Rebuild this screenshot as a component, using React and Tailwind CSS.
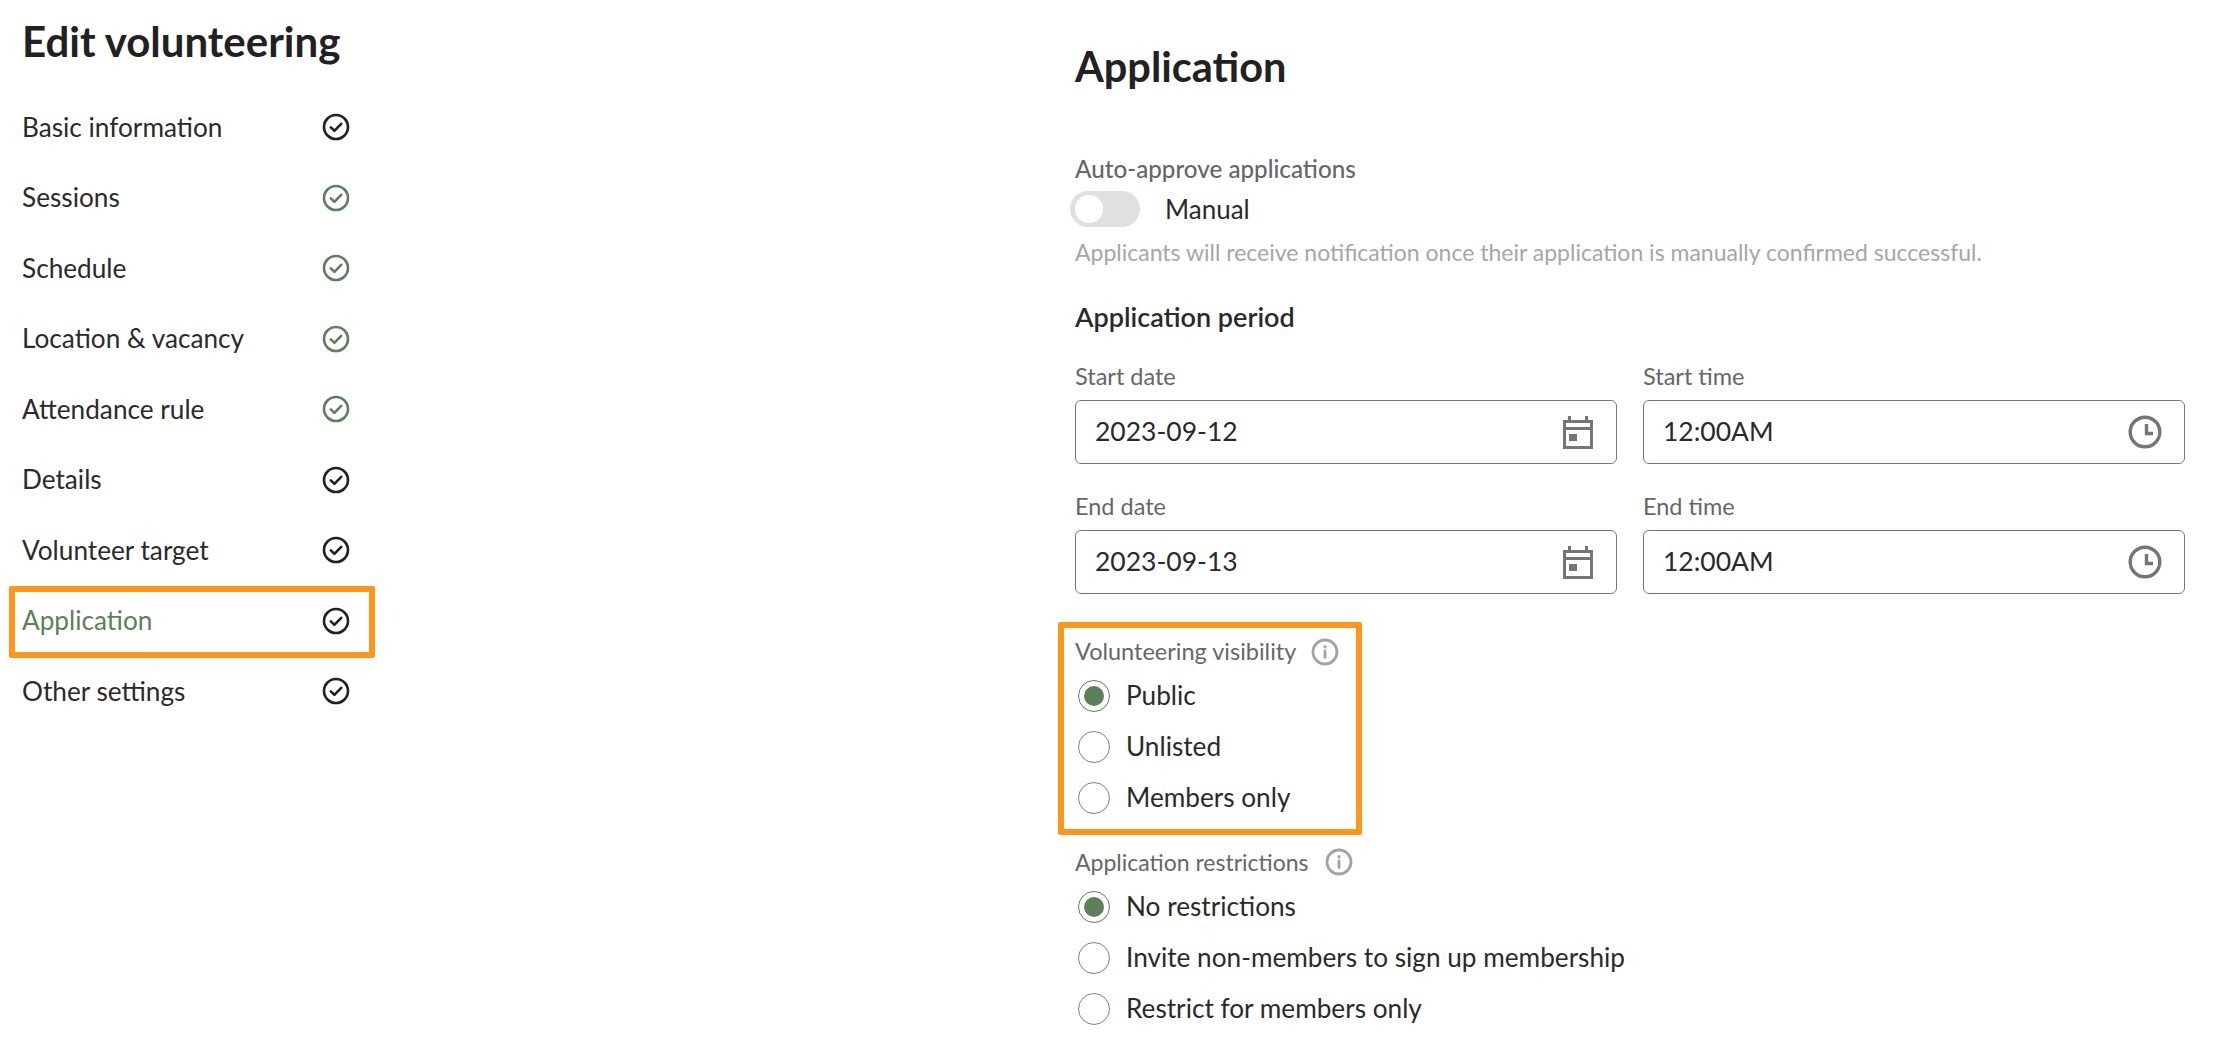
import React from 'react'

const navItems = [
  { label: 'Basic information', done: false },
  { label: 'Sessions', done: true },
  { label: 'Schedule', done: true },
  { label: 'Location & vacancy', done: true },
  { label: 'Attendance rule', done: true },
  { label: 'Details', done: false },
  { label: 'Volunteer target', done: false },
  { label: 'Application', done: false, active: true },
  { label: 'Other settings', done: false },
]

function CheckCircle({ green }) {
  return (
    <svg width="28" height="28" viewBox="0 0 28 28" fill="none" stroke={green ? '#5c8059' : '#212121'} strokeWidth="2.6" strokeLinecap="round" strokeLinejoin="round">
      <circle cx="14" cy="14" r="12" />
      <path d="M8.8 14.4l3.6 3.4 6.8-7" />
    </svg>
  )
}

function InfoIcon() {
  return (
    <svg width="28" height="28" viewBox="0 0 28 28" fill="none" stroke="#a3a3a3" strokeWidth="2.8" strokeLinecap="round">
      <circle cx="14" cy="14" r="12" />
      <path d="M14 13v6.5" />
      <path d="M14 8.6v.4" strokeWidth="3" />
    </svg>
  )
}

function CalendarIcon() {
  return (
    <svg width="32" height="34" viewBox="0 0 32 34" fill="#757575">
      <path fillRule="evenodd" d="M6 1h3v4h14V1h3v4h5v29H1V5h5V1zM4 8v4h24V8H4zm0 7v16h24V15H4z" />
      <rect x="7" y="19" width="8" height="7" />
    </svg>
  )
}

function ClockIcon() {
  return (
    <svg width="34" height="34" viewBox="0 0 34 34" fill="none" stroke="#757575" strokeWidth="3.4">
      <circle cx="17" cy="17" r="14.8" />
      <path d="M18.5 9v9.5h6.5" />
    </svg>
  )
}

function Field({ label, value, icon }) {
  return (
    <div className="flex-1">
      <div className="h-[36px] text-[23.5px] leading-[36px] text-[#666666]">{label}</div>
      <div className="mt-[6px] flex h-[64px] items-center justify-between rounded-[6px] border-[1.5px] border-[#757575] pl-[19px] pr-[22px] text-[26.5px] text-[#2a2a2a]">
        <span>{value}</span>
        {icon}
      </div>
    </div>
  )
}

function Radio({ label, checked }) {
  return (
    <div className="flex h-[51px] items-center pl-[3px]">
      {checked ? (
        <span className="flex h-[32px] w-[32px] items-center justify-center rounded-full border-[1.5px] border-[#5c8059]">
          <span className="h-[20px] w-[20px] rounded-full bg-[#5c8059]"></span>
        </span>
      ) : (
        <span className="h-[32px] w-[32px] rounded-full border-[1.5px] border-[#808080]"></span>
      )}
      <span className="ml-[16px] text-[26.2px] text-[#2a2a2a]">{label}</span>
    </div>
  )
}

export default function App() {
  return (
    <div className="flex min-h-screen bg-white font-['Lato','Noto_Sans',sans-serif] text-[#2a2a2a]">
      <aside className="w-[1075px] shrink-0 pl-[22px]">
        <h1 className="flex h-[92px] items-center pb-[9px] text-[42px] font-bold text-[#212121]">Edit volunteering</h1>
        <ul className="w-[328px]">
          {navItems.map((item) => (
            <li key={item.label} className="relative flex h-[70.5px] items-center justify-between text-[26.2px]">
              <span className={item.active ? 'text-[#5c8059]' : ''}>{item.label}</span>
              <CheckCircle green={item.done} />
              {item.active && (
                <span className="absolute -bottom-[2px] -left-[13px] -right-[25px] top-0 rounded-[2px] border-[6px] border-[#ff961c]"></span>
              )}
            </li>
          ))}
        </ul>
      </aside>

      <main className="w-[1110px]">
        <h2 className="pt-[41px] text-[41.5px] font-bold leading-[50px] text-[#212121]">Application</h2>

        <div className="mt-[61px] text-[24.2px] font-medium leading-[34px] text-[#666666]">Auto-approve applications</div>
        <div className="mt-[3px] flex h-[40px] items-center">
          <span className="-ml-[5px] flex h-[36px] w-[70px] items-center rounded-full bg-[#e0e0e0] pl-[5px]">
            <span className="h-[28px] w-[28px] rounded-full bg-white"></span>
          </span>
          <span className="ml-[25px] text-[26px]">Manual</span>
        </div>
        <p className="mt-[6px] text-[23px] leading-[34px] text-[#a6a6a6]">
          Applicants will receive notification once their application is manually confirmed successful.
        </p>

        <h3 className="mt-[30px] text-[27px] font-semibold leading-[36px]">Application period</h3>

        <div className="mt-[23px] flex gap-[26px]">
          <Field label="Start date" value="2023-09-12" icon={<CalendarIcon />} />
          <Field label="Start time" value="12:00AM" icon={<ClockIcon />} />
        </div>
        <div className="mt-[24px] flex gap-[26px]">
          <Field label="End date" value="2023-09-13" icon={<CalendarIcon />} />
          <Field label="End time" value="12:00AM" icon={<ClockIcon />} />
        </div>

        <section className="relative mt-[40px] w-[270px]">
          <div className="flex h-[36px] items-center gap-[15px] whitespace-nowrap text-[23.5px] text-[#666666]">
            Volunteering visibility
            <InfoIcon />
          </div>
          <div>
            <Radio label="Public" checked />
            <Radio label="Unlisted" />
            <Radio label="Members only" />
          </div>
          <span className="absolute -bottom-[12px] -left-[17px] -right-[17px] -top-[12px] rounded-[2px] border-[6px] border-[#ff961c]"></span>
        </section>

        <section className="mt-[21px]">
          <div className="flex h-[36px] items-center gap-[16px] text-[23px] text-[#666666]">
            Application restrictions
            <InfoIcon />
          </div>
          <div className="mt-[1px]">
            <Radio label="No restrictions" checked />
            <Radio label="Invite non-members to sign up membership" />
            <Radio label="Restrict for members only" />
          </div>
        </section>
      </main>
    </div>
  )
}
